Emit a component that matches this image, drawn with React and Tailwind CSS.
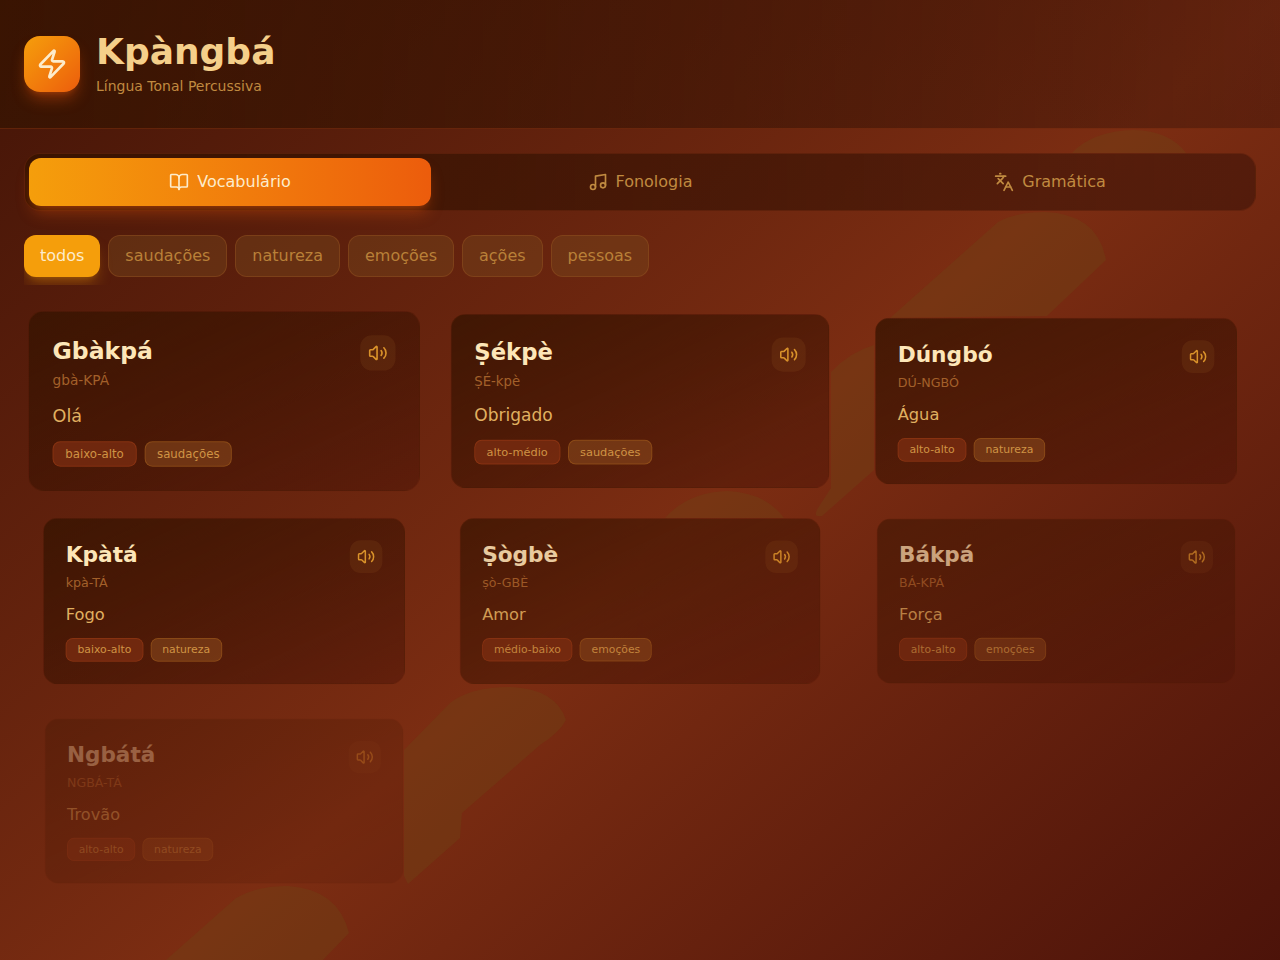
import { useState } from 'react';
import { BookOpen, Languages, Music, Volume2, Zap } from 'lucide-react';

const tabs = [
  { id: 'vocabulario', label: 'Vocabulário', icon: BookOpen },
  { id: 'fonologia', label: 'Fonologia', icon: Music },
  { id: 'gramatica', label: 'Gramática', icon: Languages }
];

const categories = ['todos', 'saudações', 'natureza', 'emoções', 'ações', 'pessoas'];

const words = [
  { word: 'Gbàkpá', pron: 'gbà-KPÁ', meaning: 'Olá', tone: 'baixo-alto', category: 'saudações', enter: 'scale-[0.98]' },
  { word: 'Ṣékpè', pron: 'ṢÉ-kpè', meaning: 'Obrigado', tone: 'alto-médio', category: 'saudações', enter: 'scale-[0.947]' },
  { word: 'Dúngbó', pron: 'DÚ-NGBÓ', meaning: 'Água', tone: 'alto-alto', category: 'natureza', enter: 'scale-[0.905]' },
  { word: 'Kpàtá', pron: 'kpà-TÁ', meaning: 'Fogo', tone: 'baixo-alto', category: 'natureza', enter: 'scale-[0.905]' },
  { word: 'Ṣògbè', pron: 'ṣò-GBÈ', meaning: 'Amor', tone: 'médio-baixo', category: 'emoções', enter: 'scale-[0.902] opacity-85' },
  { word: 'Bákpá', pron: 'BÁ-KPÁ', meaning: 'Força', tone: 'alto-alto', category: 'emoções', enter: 'scale-[0.897] opacity-65' },
  { word: 'Ngbátá', pron: 'NGBÁ-TÁ', meaning: 'Trovão', tone: 'alto-alto', category: 'natureza', enter: 'scale-[0.897] opacity-30' }
];

function Backdrop() {
  return (
    <svg className="pointer-events-none absolute inset-0 -z-10 size-full" aria-hidden="true">
      <g fill="#6e4414" fillOpacity="0.38">
        <path d="M1072 153 Q1092 131 1134 130 Q1170 131 1186 153 Z" />
        <path d="M890 318 L998 222 Q1016 212 1045 212 Q1098 214 1106 260 L1047 316 Z" />
        <path d="M831 372 Q850 352 874 345 L874 470 L822 516 Q812 518 818 508 L831 488 Z" />
        <path d="M665 518 Q688 492 728 491 Q766 493 784 518 Z" />
        <path d="M404 750 L450 703 Q470 687 511 687 Q556 689 566 720 Q560 732 540 745 L462 813 L460 838 L408 884 L404 876 Z" />
        <path d="M166 960 L236 898 Q256 886 288 886 Q338 889 349 933 L323 960 Z" />
      </g>
    </svg>
  );
}

function WordCard({ item }) {
  return (
    <article className={`rounded-2xl border border-[#7c2d12]/20 bg-linear-to-br from-[#371401]/80 to-[#450f05]/40 p-6 ${item.enter}`}>
      <div className="flex items-start justify-between">
        <div>
          <h3 className="text-2xl font-bold text-[#fde6b8]">{item.word}</h3>
          <p className="mt-1 text-sm text-[#a3602a]">{item.pron}</p>
        </div>
        <button aria-label={`Ouvir ${item.word}`} className="rounded-xl bg-[#a0622a]/15 p-2 text-[#d9922a]">
          <Volume2 size={20} />
        </button>
      </div>
      <p className="mt-3 text-lg text-[#e0b060]">{item.meaning}</p>
      <div className="mt-3 flex gap-2">
        <span className="rounded-lg border border-[#9a3a14]/60 bg-[#7c2d12]/75 px-3 py-1 text-xs text-[#cf9344]">{item.tone}</span>
        <span className="rounded-lg border border-[#a8621c]/50 bg-[#92501f]/50 px-3 py-1 text-xs text-[#cf9344]">{item.category}</span>
      </div>
    </article>
  );
}

export default function App() {
  const [tab, setTab] = useState('vocabulario');
  const [category, setCategory] = useState('todos');
  const visible = category === 'todos' ? words : words.filter((w) => w.category === category);

  return (
    <div className="relative isolate min-h-screen overflow-hidden bg-linear-to-br from-[#431407] via-[#7c2d12] to-[#450f08] font-['DejaVu_Sans',sans-serif]">
      <Backdrop />
      <header className="border-b border-[#9a3a14]/40 bg-linear-to-r from-[#371401]/80 to-[#3a1208]/40 px-6 py-8">
        <div className="flex items-center gap-4">
          <div className="grid size-14 place-items-center rounded-2xl bg-linear-to-br from-[#f59e0b] to-[#ec5c0c] text-[#fdeccb] shadow-lg shadow-[#ea580c]/40">
            <Zap size={32} />
          </div>
          <div>
            <h1 className="text-4xl font-bold text-[#f5cf8a]">Kpàngbá</h1>
            <p className="mt-1 text-sm text-[#c08a40]">Língua Tonal Percussiva</p>
          </div>
        </div>
      </header>

      <main className="px-6 pt-6 pb-56">
        <nav className="mb-6 grid grid-cols-3 gap-2 rounded-2xl border border-[#7c2d12]/40 bg-linear-to-r from-[#371401]/80 to-[#3a1208]/55 p-1">
          {tabs.map(({ id, label, icon: Icon }) => (
            <button
              key={id}
              onClick={() => setTab(id)}
              className={`flex items-center justify-center gap-2 rounded-xl py-3 ${
                tab === id
                  ? 'bg-linear-to-r from-[#f59e0b] to-[#ec5c0c] text-[#fdeccb] shadow-lg shadow-[#ea580c]/35'
                  : 'text-[#c08a40]'
              }`}
            >
              <Icon size={20} />
              {label}
            </button>
          ))}
        </nav>

        <div className="mb-6 flex gap-2 overflow-x-auto pb-2">
          {categories.map((name) => (
            <button
              key={name}
              onClick={() => setCategory(name)}
              className={`shrink-0 rounded-xl px-4 py-2 ${
                category === name
                  ? 'bg-[#f59e0b] text-[#fdeccb] shadow-lg shadow-[#f59e0b]/30'
                  : 'border border-[#92501f]/50 bg-[#7a5020]/35 text-[#b98038]'
              }`}
            >
              {name}
            </button>
          ))}
        </div>

        <section className="grid grid-cols-3 gap-4">
          {visible.map((item) => (
            <WordCard key={item.word} item={item} />
          ))}
        </section>
      </main>
    </div>
  );
}
